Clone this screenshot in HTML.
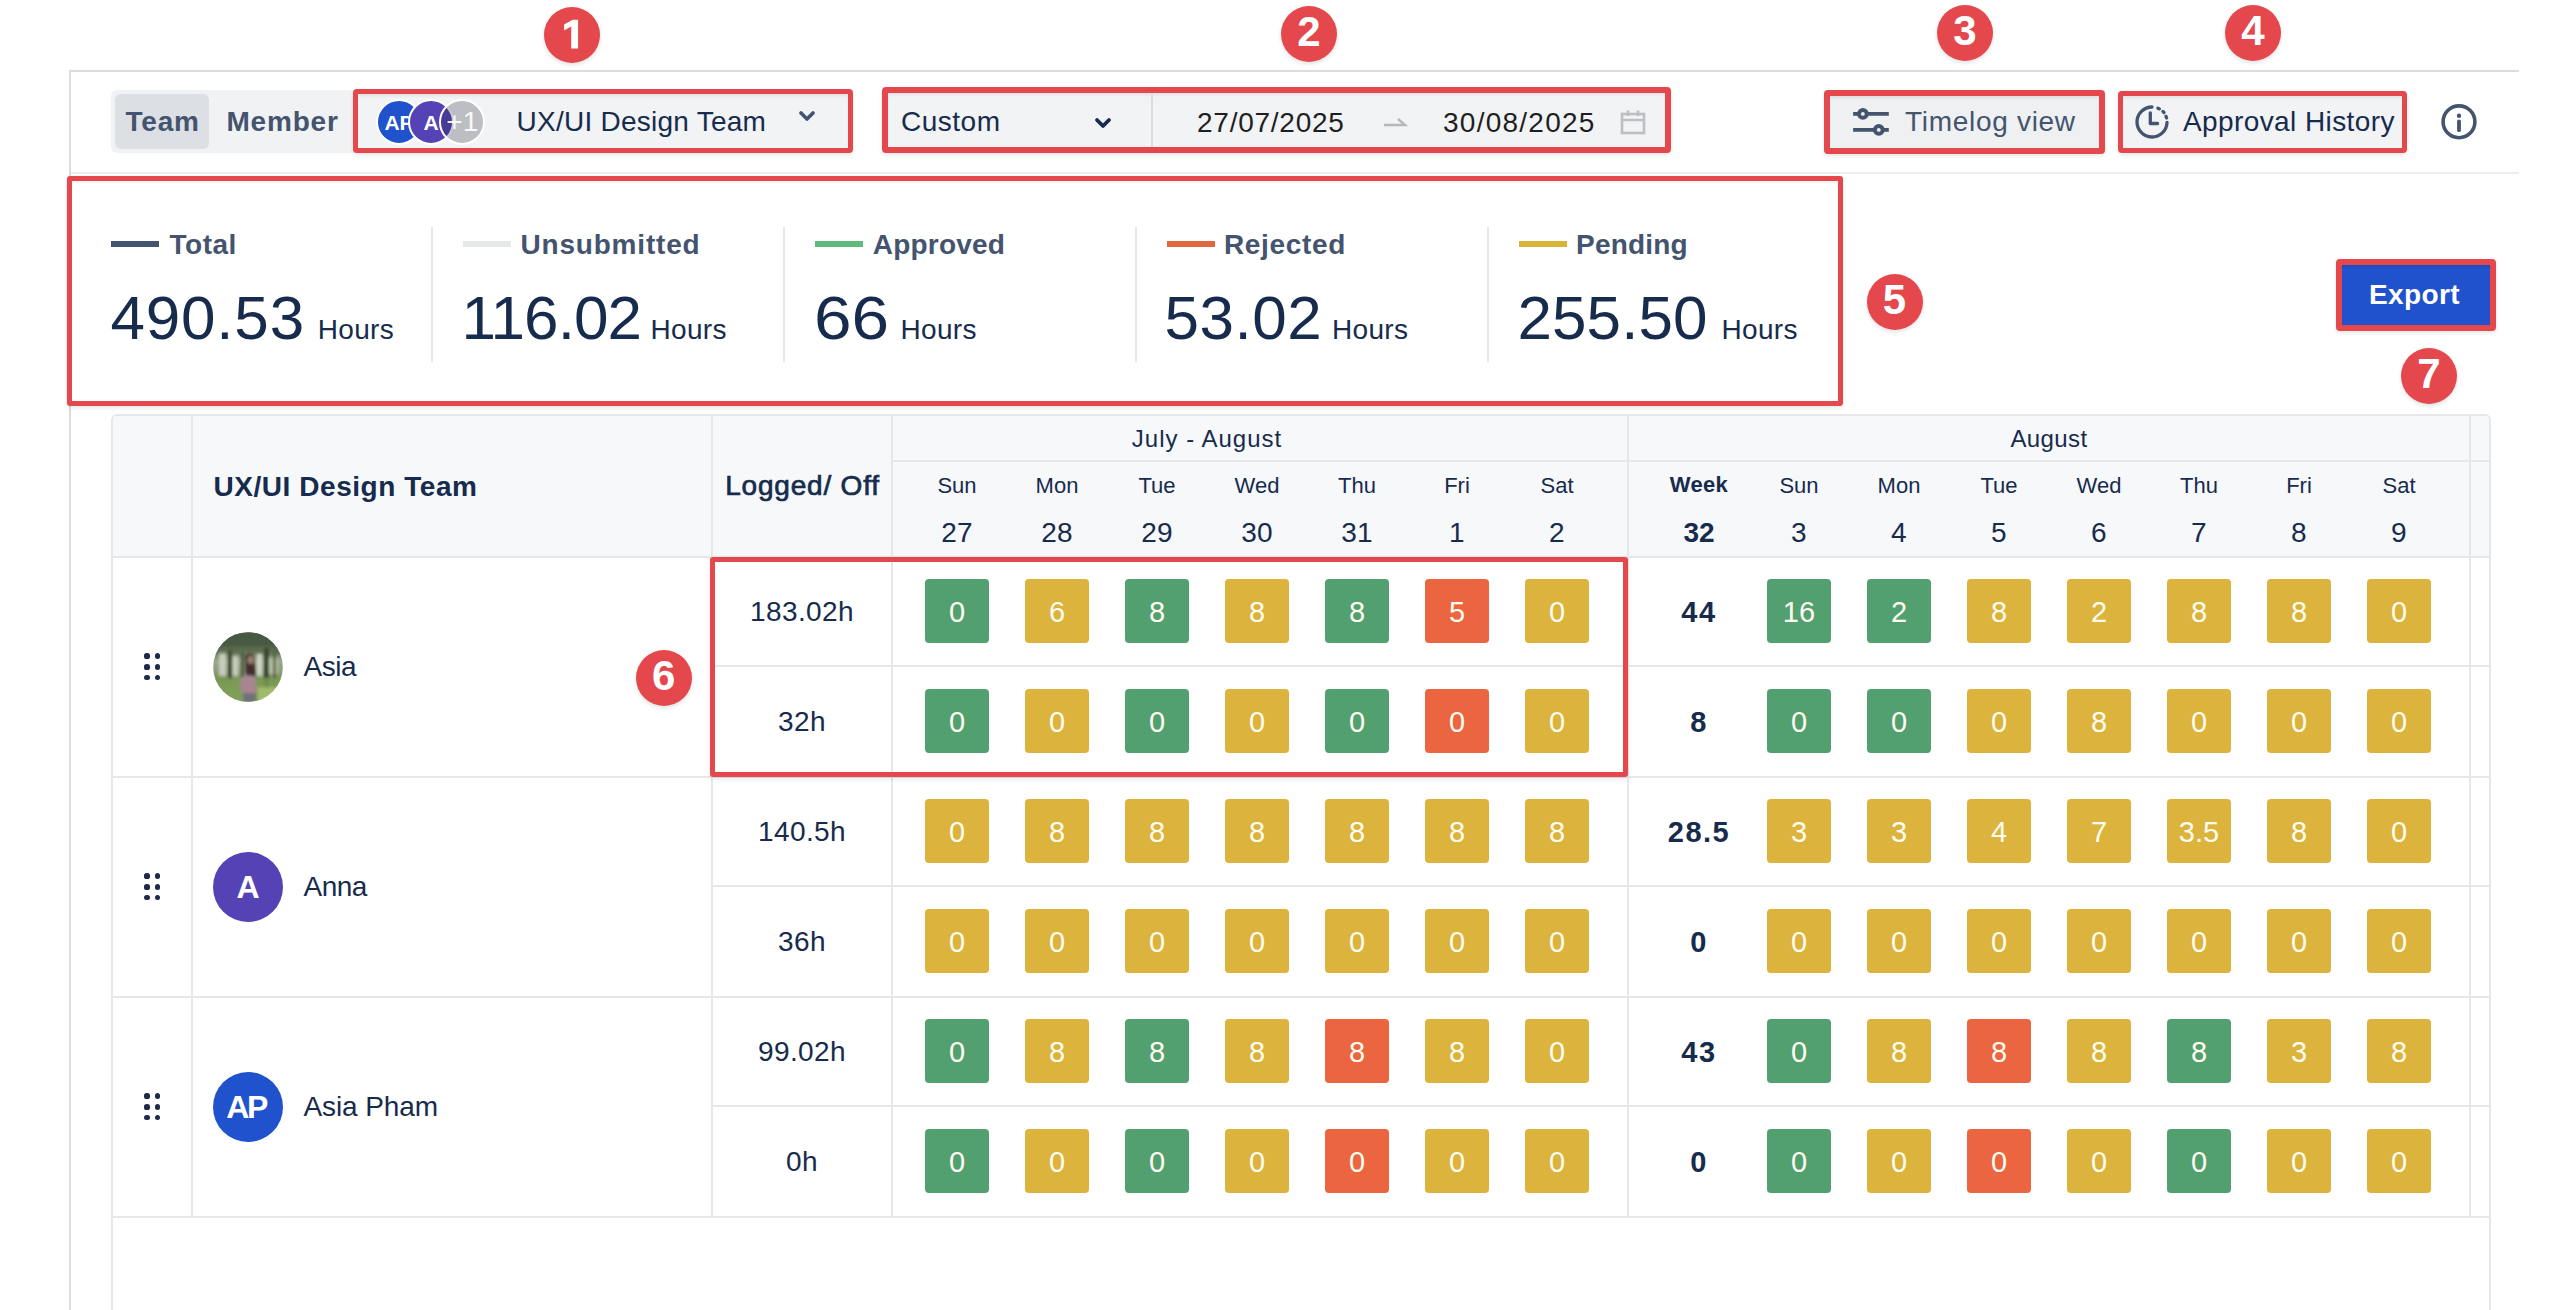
<!DOCTYPE html>
<html><head><meta charset="utf-8"><style>
html,body{margin:0;padding:0;background:#fff;}
body{width:2568px;height:1310px;position:relative;overflow:hidden;font-family:"Liberation Sans",sans-serif;}
.t{position:absolute;white-space:nowrap;}
.b{position:absolute;}
.cell{position:absolute;width:64px;height:64px;border-radius:4px;color:#fffdf0;font-size:29px;line-height:66px;text-align:center;font-family:"Liberation Sans",sans-serif;}
.badge{position:absolute;width:56px;height:56px;border-radius:50%;background:#e4474c;color:#fff;font-weight:700;font-size:42px;line-height:52.8px;text-align:center;box-shadow:0 2px 4px rgba(0,0,0,0.12);}
</style></head><body>
<div class="b" style="left:69px;top:70px;width:2450px;height:2px;background:#dcdcdc"></div>
<div class="b" style="left:69px;top:70px;width:2px;height:1240px;background:#dcdcdc"></div>
<div class="b" style="left:71px;top:172px;width:2448px;height:2px;background:#ebedf0"></div>
<div class="b" style="left:111px;top:90px;width:260px;height:63px;background:#f1f2f4;border-radius:6px"></div>
<div class="b" style="left:115px;top:94px;width:94px;height:55px;background:#dcdfe4;border-radius:6px"></div>
<div class="t" style="left:125.5px;top:107.8px;font-size:28px;line-height:28px;color:#44546f;font-weight:700;letter-spacing:0.8px;">Team</div>
<div class="t" style="left:226.5px;top:107.8px;font-size:28px;line-height:28px;color:#44546f;font-weight:700;letter-spacing:0.8px;">Member</div>
<div class="b" style="left:353px;top:89px;width:500px;height:64px;background:#f1f3f5;border:5px solid #e4474c;border-radius:4px;box-sizing:border-box;box-shadow:0 2px 4px rgba(0,0,0,0.10), inset 0 3px 3px -1px rgba(0,0,0,0.07)"></div>
<div class="b" style="left:376.0px;top:98.8px;width:46px;height:46px;border-radius:50%;background:#1f52cc;box-sizing:border-box;border:2px solid #fff;"></div>
<div class="t" style="left:376.0px;width:46px;text-align:center;top:111.5px;font-size:21px;line-height:21px;color:#fff;font-weight:700;letter-spacing:0px;">AP</div>
<div class="b" style="left:408.0px;top:98.8px;width:46px;height:46px;border-radius:50%;background:#5543b6;box-sizing:border-box;border:2px solid #fff;"></div>
<div class="t" style="left:408.0px;width:46px;text-align:center;top:111.5px;font-size:21px;line-height:21px;color:#fff;font-weight:700;letter-spacing:0px;">A</div>
<div class="b" style="left:439.3px;top:98.8px;width:46px;height:46px;border-radius:50%;background:rgba(30,30,50,0.25);box-sizing:border-box;border:2px solid #fff;"></div>
<div class="t" style="left:439.3px;width:46px;text-align:center;top:107.6px;font-size:28px;line-height:28px;color:rgba(255,255,255,0.92);font-weight:400;letter-spacing:0px;">+1</div>
<div class="t" style="left:516.5px;top:107.8px;font-size:28px;line-height:28px;color:#172b4d;font-weight:400;letter-spacing:0.25px;">UX/UI Design Team</div>
<svg class="b" style="left:799px;top:110px" width="16" height="14" viewBox="0 0 16 14"><path d="M2 3 L8 9 L14 3" fill="none" stroke="#44546f" stroke-width="3.6" stroke-linecap="round" stroke-linejoin="round"/></svg>
<div class="b" style="left:882px;top:87px;width:789px;height:66px;background:#f1f3f5;border:6px solid #e4474c;border-radius:4px;box-sizing:border-box;box-shadow:0 2px 4px rgba(0,0,0,0.10), inset 0 3px 3px -1px rgba(0,0,0,0.07)"></div>
<div class="b" style="left:1151px;top:93px;width:2px;height:54px;background:#d9dce0"></div>
<div class="t" style="left:901.0px;top:108.1px;font-size:28px;line-height:28px;color:#172b4d;font-weight:400;letter-spacing:0.5px;">Custom</div>
<svg class="b" style="left:1093px;top:116px" width="20" height="16" viewBox="0 0 20 16"><path d="M4 4 L10 10 L16 4" fill="none" stroke="#172b4d" stroke-width="3.8" stroke-linecap="round" stroke-linejoin="round"/></svg>
<div class="t" style="left:1197.0px;top:108.8px;font-size:28px;line-height:28px;color:#1f1f1f;font-weight:400;letter-spacing:0.75px;">27/07/2025</div>
<div class="t" style="left:1443.0px;top:108.8px;font-size:28px;line-height:28px;color:#1f1f1f;font-weight:400;letter-spacing:1.25px;">30/08/2025</div>
<svg class="b" style="left:1382px;top:114px" width="26" height="14" viewBox="0 0 26 14"><path d="M2 11 H23 L16 5" fill="none" stroke="#b5b8bb" stroke-width="2.4"/></svg>
<svg class="b" style="left:1619px;top:108px" width="28" height="28" viewBox="0 0 28 28"><rect x="3" y="6" width="22" height="19" fill="none" stroke="#bcc0c3" stroke-width="2.6"/><path d="M3 12 H25 M9 2.5 V8 M19 2.5 V8" stroke="#bcc0c3" stroke-width="2.6"/></svg>
<div class="b" style="left:1824px;top:90px;width:281px;height:64px;background:#eef0f2;border:6px solid #e4474c;border-radius:4px;box-sizing:border-box;box-shadow:0 2px 4px rgba(0,0,0,0.10), inset 0 3px 3px -1px rgba(0,0,0,0.07)"></div>
<svg class="b" style="left:1850px;top:104px" width="42" height="36" viewBox="0 0 42 36"><path d="M3.1 9.9 H38.8 M3.1 25.9 H38.8" stroke="#44546f" stroke-width="3.6"/><circle cx="12.9" cy="9.9" r="3.9" fill="#eef0f2" stroke="#44546f" stroke-width="4"/><circle cx="28.8" cy="25.9" r="3.9" fill="#eef0f2" stroke="#44546f" stroke-width="4"/></svg>
<div class="t" style="left:1905.0px;top:107.8px;font-size:28px;line-height:28px;color:#44546f;font-weight:400;letter-spacing:0.7px;">Timelog view</div>
<div class="b" style="left:2118px;top:91px;width:289px;height:62px;background:#f1f3f5;border:5px solid #e4474c;border-radius:4px;box-sizing:border-box;box-shadow:0 2px 4px rgba(0,0,0,0.10), inset 0 3px 3px -1px rgba(0,0,0,0.07)"></div>
<svg class="b" style="left:2131px;top:101px" width="42" height="42" viewBox="0 0 42 42"><path d="M21 6 A15 15 0 1 0 36 21.5" fill="none" stroke="#44546f" stroke-width="3.3" stroke-linecap="round"/><path d="M26.9 7.2 L28.4 7.9 M31.9 10.4 L33 11.6 M35 15.4 L35.6 17" fill="none" stroke="#44546f" stroke-width="3.3" stroke-linecap="round"/><path d="M19.3 11.8 V22.5 H26.6" fill="none" stroke="#44546f" stroke-width="3.3" stroke-linecap="round" stroke-linejoin="round"/></svg>
<div class="t" style="left:2183.0px;top:107.8px;font-size:28px;line-height:28px;color:#172b4d;font-weight:400;letter-spacing:0.4px;">Approval History</div>
<svg class="b" style="left:2439px;top:102px" width="40" height="40" viewBox="0 0 40 40"><circle cx="20" cy="19.8" r="15.9" fill="none" stroke="#44546f" stroke-width="3.6"/><circle cx="20" cy="13.7" r="2.2" fill="#44546f"/><path d="M20 19.3 V28.2" stroke="#44546f" stroke-width="3.8" stroke-linecap="round"/></svg>
<div class="b" style="left:67px;top:175.5px;width:1776px;height:230px;border:5.5px solid #e4474c;border-radius:3px;box-sizing:border-box;box-shadow:0 2px 4px rgba(0,0,0,0.10), inset 0 3px 3px -1px rgba(0,0,0,0.05)"></div>
<div class="b" style="left:111px;top:241px;width:48px;height:6px;background:#44546f"></div>
<div class="t" style="left:169.5px;top:231.3px;font-size:28px;line-height:28px;color:#44546f;font-weight:700;letter-spacing:0.5px;">Total</div>
<div class="t" style="left:110.5px;top:286.7px;font-size:62px;line-height:62px;color:#172b4d;font-weight:400;letter-spacing:0.8px;">490.53</div>
<div class="t" style="left:317.8px;top:315.5px;font-size:28px;line-height:28px;color:#172b4d;font-weight:400;letter-spacing:0.3px;">Hours</div>
<div class="b" style="left:463px;top:241px;width:48px;height:6px;background:#e6e8eb"></div>
<div class="t" style="left:520.5px;top:231.3px;font-size:28px;line-height:28px;color:#44546f;font-weight:700;letter-spacing:0.8px;">Unsubmitted</div>
<div class="t" style="left:461.5px;top:286.7px;font-size:62px;line-height:62px;color:#172b4d;font-weight:400;letter-spacing:-0.9px;">116.02</div>
<div class="t" style="left:650.5px;top:315.5px;font-size:28px;line-height:28px;color:#172b4d;font-weight:400;letter-spacing:0.3px;">Hours</div>
<div class="b" style="left:815px;top:241px;width:48px;height:6px;background:#5fba7d"></div>
<div class="t" style="left:872.8px;top:231.3px;font-size:28px;line-height:28px;color:#44546f;font-weight:700;letter-spacing:0.2px;">Approved</div>
<div class="t" style="left:813.5px;top:286.7px;font-size:62px;line-height:62px;color:#172b4d;font-weight:400;letter-spacing:0px;transform:scaleX(1.09);transform-origin:0 0;">66</div>
<div class="t" style="left:900.5px;top:315.5px;font-size:28px;line-height:28px;color:#172b4d;font-weight:400;letter-spacing:0.3px;">Hours</div>
<div class="b" style="left:1167px;top:241px;width:48px;height:6px;background:#e2673f"></div>
<div class="t" style="left:1224.0px;top:231.3px;font-size:28px;line-height:28px;color:#44546f;font-weight:700;letter-spacing:0.65px;">Rejected</div>
<div class="t" style="left:1164.5px;top:286.7px;font-size:62px;line-height:62px;color:#172b4d;font-weight:400;letter-spacing:0.5px;">53.02</div>
<div class="t" style="left:1332.0px;top:315.5px;font-size:28px;line-height:28px;color:#172b4d;font-weight:400;letter-spacing:0.3px;">Hours</div>
<div class="b" style="left:1519px;top:241px;width:48px;height:6px;background:#d9b43b"></div>
<div class="t" style="left:1576.0px;top:231.3px;font-size:28px;line-height:28px;color:#44546f;font-weight:700;letter-spacing:0.2px;">Pending</div>
<div class="t" style="left:1517.4px;top:286.7px;font-size:62px;line-height:62px;color:#172b4d;font-weight:400;letter-spacing:0.1px;">255.50</div>
<div class="t" style="left:1721.5px;top:315.5px;font-size:28px;line-height:28px;color:#172b4d;font-weight:400;letter-spacing:0.3px;">Hours</div>
<div class="b" style="left:431px;top:227px;width:2px;height:135px;background:#e6e8eb"></div>
<div class="b" style="left:783px;top:227px;width:2px;height:135px;background:#e6e8eb"></div>
<div class="b" style="left:1135px;top:227px;width:2px;height:135px;background:#e6e8eb"></div>
<div class="b" style="left:1487px;top:227px;width:2px;height:135px;background:#e6e8eb"></div>
<div class="b" style="left:2336px;top:259px;width:160px;height:72px;background:#1f52cc;border:6px solid #e4474c;border-radius:4px;box-sizing:border-box;box-shadow:0 2px 4px rgba(0,0,0,0.10), inset 0 3px 3px -1px rgba(0,0,0,0.07)"></div>
<div class="t" style="left:2264.5px;width:300px;text-align:center;top:280.8px;font-size:28px;line-height:28px;color:#ffffff;font-weight:700;letter-spacing:0.4px;">Export</div>
<div class="b" style="left:111px;top:414px;width:2380px;height:916px;border:2px solid #e5e7eb;border-radius:6px;box-sizing:border-box;background:#fff"></div>
<div class="b" style="left:113px;top:416px;width:2376px;height:141px;background:#f6f8fa;border-radius:4px 4px 0 0"></div>
<div class="b" style="left:191px;top:414px;width:2px;height:803px;background:#e5e7eb"></div>
<div class="b" style="left:711px;top:414px;width:2px;height:803px;background:#e5e7eb"></div>
<div class="b" style="left:891px;top:414px;width:2px;height:803px;background:#e5e7eb"></div>
<div class="b" style="left:1627px;top:414px;width:2px;height:803px;background:#e5e7eb"></div>
<div class="b" style="left:2469px;top:414px;width:2px;height:803px;background:#e5e7eb"></div>
<div class="b" style="left:892px;top:460px;width:1599px;height:2px;background:#e5e7eb"></div>
<div class="b" style="left:111px;top:556px;width:2380px;height:2px;background:#e5e7eb"></div>
<div class="b" style="left:712px;top:665px;width:1779px;height:2px;background:#e5e7eb"></div>
<div class="b" style="left:111px;top:776px;width:2380px;height:2px;background:#e5e7eb"></div>
<div class="b" style="left:712px;top:885px;width:1779px;height:2px;background:#e5e7eb"></div>
<div class="b" style="left:111px;top:996px;width:2380px;height:2px;background:#e5e7eb"></div>
<div class="b" style="left:712px;top:1105px;width:1779px;height:2px;background:#e5e7eb"></div>
<div class="b" style="left:111px;top:1216px;width:2380px;height:2px;background:#e5e7eb"></div>
<div class="t" style="left:213.5px;top:472.5px;font-size:28px;line-height:28px;color:#172b4d;font-weight:700;letter-spacing:0.55px;">UX/UI Design Team</div>
<div class="t" style="left:652.5px;width:300px;text-align:center;top:472.3px;font-size:28px;line-height:28px;color:#172b4d;font-weight:400;letter-spacing:0.8px;-webkit-text-stroke:0.7px #172b4d;">Logged/ Off</div>
<div class="t" style="left:1057.0px;width:300px;text-align:center;top:427.4px;font-size:24px;line-height:24px;color:#172b4d;font-weight:400;letter-spacing:1.0px;">July - August</div>
<div class="t" style="left:1899.0px;width:300px;text-align:center;top:427.4px;font-size:24px;line-height:24px;color:#172b4d;font-weight:400;letter-spacing:0.4px;">August</div>
<div class="t" style="left:907.0px;width:100px;text-align:center;top:474.6px;font-size:22px;line-height:22px;color:#172b4d;font-weight:400;letter-spacing:0px;">Sun</div>
<div class="t" style="left:907.0px;width:100px;text-align:center;top:519.2px;font-size:28px;line-height:28px;color:#172b4d;font-weight:400;letter-spacing:0.3px;">27</div>
<div class="t" style="left:1007.0px;width:100px;text-align:center;top:474.6px;font-size:22px;line-height:22px;color:#172b4d;font-weight:400;letter-spacing:0px;">Mon</div>
<div class="t" style="left:1007.0px;width:100px;text-align:center;top:519.2px;font-size:28px;line-height:28px;color:#172b4d;font-weight:400;letter-spacing:0.3px;">28</div>
<div class="t" style="left:1107.0px;width:100px;text-align:center;top:474.6px;font-size:22px;line-height:22px;color:#172b4d;font-weight:400;letter-spacing:0px;">Tue</div>
<div class="t" style="left:1107.0px;width:100px;text-align:center;top:519.2px;font-size:28px;line-height:28px;color:#172b4d;font-weight:400;letter-spacing:0.3px;">29</div>
<div class="t" style="left:1207.0px;width:100px;text-align:center;top:474.6px;font-size:22px;line-height:22px;color:#172b4d;font-weight:400;letter-spacing:0px;">Wed</div>
<div class="t" style="left:1207.0px;width:100px;text-align:center;top:519.2px;font-size:28px;line-height:28px;color:#172b4d;font-weight:400;letter-spacing:0.3px;">30</div>
<div class="t" style="left:1307.0px;width:100px;text-align:center;top:474.6px;font-size:22px;line-height:22px;color:#172b4d;font-weight:400;letter-spacing:0px;">Thu</div>
<div class="t" style="left:1307.0px;width:100px;text-align:center;top:519.2px;font-size:28px;line-height:28px;color:#172b4d;font-weight:400;letter-spacing:0.3px;">31</div>
<div class="t" style="left:1407.0px;width:100px;text-align:center;top:474.6px;font-size:22px;line-height:22px;color:#172b4d;font-weight:400;letter-spacing:0px;">Fri</div>
<div class="t" style="left:1407.0px;width:100px;text-align:center;top:519.2px;font-size:28px;line-height:28px;color:#172b4d;font-weight:400;letter-spacing:0.3px;">1</div>
<div class="t" style="left:1507.0px;width:100px;text-align:center;top:474.6px;font-size:22px;line-height:22px;color:#172b4d;font-weight:400;letter-spacing:0px;">Sat</div>
<div class="t" style="left:1507.0px;width:100px;text-align:center;top:519.2px;font-size:28px;line-height:28px;color:#172b4d;font-weight:400;letter-spacing:0.3px;">2</div>
<div class="t" style="left:1649.0px;width:100px;text-align:center;top:474.1px;font-size:22px;line-height:22px;color:#172b4d;font-weight:700;letter-spacing:0.3px;">Week</div>
<div class="t" style="left:1649.0px;width:100px;text-align:center;top:519.3px;font-size:28px;line-height:28px;color:#172b4d;font-weight:700;letter-spacing:0px;">32</div>
<div class="t" style="left:1749.0px;width:100px;text-align:center;top:474.6px;font-size:22px;line-height:22px;color:#172b4d;font-weight:400;letter-spacing:0px;">Sun</div>
<div class="t" style="left:1749.0px;width:100px;text-align:center;top:519.2px;font-size:28px;line-height:28px;color:#172b4d;font-weight:400;letter-spacing:0.3px;">3</div>
<div class="t" style="left:1849.0px;width:100px;text-align:center;top:474.6px;font-size:22px;line-height:22px;color:#172b4d;font-weight:400;letter-spacing:0px;">Mon</div>
<div class="t" style="left:1849.0px;width:100px;text-align:center;top:519.2px;font-size:28px;line-height:28px;color:#172b4d;font-weight:400;letter-spacing:0.3px;">4</div>
<div class="t" style="left:1949.0px;width:100px;text-align:center;top:474.6px;font-size:22px;line-height:22px;color:#172b4d;font-weight:400;letter-spacing:0px;">Tue</div>
<div class="t" style="left:1949.0px;width:100px;text-align:center;top:519.2px;font-size:28px;line-height:28px;color:#172b4d;font-weight:400;letter-spacing:0.3px;">5</div>
<div class="t" style="left:2049.0px;width:100px;text-align:center;top:474.6px;font-size:22px;line-height:22px;color:#172b4d;font-weight:400;letter-spacing:0px;">Wed</div>
<div class="t" style="left:2049.0px;width:100px;text-align:center;top:519.2px;font-size:28px;line-height:28px;color:#172b4d;font-weight:400;letter-spacing:0.3px;">6</div>
<div class="t" style="left:2149.0px;width:100px;text-align:center;top:474.6px;font-size:22px;line-height:22px;color:#172b4d;font-weight:400;letter-spacing:0px;">Thu</div>
<div class="t" style="left:2149.0px;width:100px;text-align:center;top:519.2px;font-size:28px;line-height:28px;color:#172b4d;font-weight:400;letter-spacing:0.3px;">7</div>
<div class="t" style="left:2249.0px;width:100px;text-align:center;top:474.6px;font-size:22px;line-height:22px;color:#172b4d;font-weight:400;letter-spacing:0px;">Fri</div>
<div class="t" style="left:2249.0px;width:100px;text-align:center;top:519.2px;font-size:28px;line-height:28px;color:#172b4d;font-weight:400;letter-spacing:0.3px;">8</div>
<div class="t" style="left:2349.0px;width:100px;text-align:center;top:474.6px;font-size:22px;line-height:22px;color:#172b4d;font-weight:400;letter-spacing:0px;">Sat</div>
<div class="t" style="left:2349.0px;width:100px;text-align:center;top:519.2px;font-size:28px;line-height:28px;color:#172b4d;font-weight:400;letter-spacing:0.3px;">9</div>
<div class="b" style="left:144.4px;top:653.4px;width:5.2px;height:5.2px;border-radius:50%;background:#1e2a4a"></div>
<div class="b" style="left:144.4px;top:664.4px;width:5.2px;height:5.2px;border-radius:50%;background:#1e2a4a"></div>
<div class="b" style="left:144.4px;top:674.9px;width:5.2px;height:5.2px;border-radius:50%;background:#1e2a4a"></div>
<div class="b" style="left:154.9px;top:653.4px;width:5.2px;height:5.2px;border-radius:50%;background:#1e2a4a"></div>
<div class="b" style="left:154.9px;top:664.4px;width:5.2px;height:5.2px;border-radius:50%;background:#1e2a4a"></div>
<div class="b" style="left:154.9px;top:674.9px;width:5.2px;height:5.2px;border-radius:50%;background:#1e2a4a"></div>
<svg class="b" style="left:213px;top:632px" width="70" height="70" viewBox="0 0 70 70"><defs><clipPath id="cp"><circle cx="35" cy="35" r="34.8"/></clipPath><filter id="bl" x="-20%" y="-20%" width="140%" height="140%"><feGaussianBlur stdDeviation="1.6"/></filter><linearGradient id="gg" x1="0" y1="0" x2="0" y2="1"><stop offset="0" stop-color="#4d5d43"/><stop offset="0.25" stop-color="#5f6f52"/><stop offset="0.42" stop-color="#9aa68e"/><stop offset="0.58" stop-color="#8a9a76"/><stop offset="0.7" stop-color="#6e8c4c"/><stop offset="1" stop-color="#9db56a"/></linearGradient></defs><g clip-path="url(#cp)"><rect width="70" height="70" fill="url(#gg)"/><g filter="url(#bl)"><rect x="0" y="0" width="70" height="16" fill="#465840" opacity="0.85"/><rect x="6" y="20" width="7" height="24" fill="#cfd5c6" opacity="0.85"/><rect x="20" y="24" width="5" height="20" fill="#d6dbcf" opacity="0.8"/><rect x="44" y="22" width="5" height="22" fill="#dde1d6" opacity="0.85"/><rect x="56" y="26" width="9" height="16" fill="#bfcaae" opacity="0.8"/><rect x="0" y="14" width="70" height="8" fill="#5a6a4c" opacity="0.6"/><rect x="15" y="18" width="4" height="30" fill="#3e4c35"/><rect x="28" y="20" width="3" height="28" fill="#4b5a40"/><rect x="51" y="16" width="5" height="40" fill="#39452f"/><rect x="60" y="18" width="3" height="30" fill="#54623f"/><rect x="0" y="46" width="70" height="24" fill="#7d9c55" opacity="0.8"/><rect x="45" y="55" width="25" height="15" fill="#a9c070" opacity="0.8"/><path d="M32 24 Q37 19 41 24 L43 44 L33 44 Z" fill="#3f2e2a"/><ellipse cx="37.5" cy="28" rx="3" ry="4" fill="#9c7e74"/><path d="M27 50 Q28 44 33 43 L41 44 Q44 52 43 63 L30 63 Q28 57 27 50 Z" fill="#a98493"/><rect x="30" y="61" width="13" height="10" fill="#6f7278"/></g></g></svg>
<div class="t" style="left:303.5px;top:653.3px;font-size:28px;line-height:28px;color:#172b4d;font-weight:400;letter-spacing:-0.5px;">Asia</div>
<div class="t" style="left:712.0px;width:180px;text-align:center;top:598.3px;font-size:28px;line-height:28px;color:#172b4d;font-weight:400;letter-spacing:0.4px;">183.02h</div>
<div class="t" style="left:712.0px;width:180px;text-align:center;top:708.3px;font-size:28px;line-height:28px;color:#172b4d;font-weight:400;letter-spacing:0.4px;">32h</div>
<div class="t" style="left:1649.0px;width:100px;text-align:center;top:597.5px;font-size:29px;line-height:29px;color:#172b4d;font-weight:700;letter-spacing:1.5px;">44</div>
<div class="t" style="left:1649.0px;width:100px;text-align:center;top:707.5px;font-size:29px;line-height:29px;color:#172b4d;font-weight:700;letter-spacing:1.5px;">8</div>
<div class="cell" style="left:925px;top:579px;background:#52a070">0</div>
<div class="cell" style="left:1767px;top:579px;background:#52a070">16</div>
<div class="cell" style="left:1025px;top:579px;background:#dbb33d">6</div>
<div class="cell" style="left:1867px;top:579px;background:#52a070">2</div>
<div class="cell" style="left:1125px;top:579px;background:#52a070">8</div>
<div class="cell" style="left:1967px;top:579px;background:#dbb33d">8</div>
<div class="cell" style="left:1225px;top:579px;background:#dbb33d">8</div>
<div class="cell" style="left:2067px;top:579px;background:#dbb33d">2</div>
<div class="cell" style="left:1325px;top:579px;background:#52a070">8</div>
<div class="cell" style="left:2167px;top:579px;background:#dbb33d">8</div>
<div class="cell" style="left:1425px;top:579px;background:#ea6540">5</div>
<div class="cell" style="left:2267px;top:579px;background:#dbb33d">8</div>
<div class="cell" style="left:1525px;top:579px;background:#dbb33d">0</div>
<div class="cell" style="left:2367px;top:579px;background:#dbb33d">0</div>
<div class="cell" style="left:925px;top:689px;background:#52a070">0</div>
<div class="cell" style="left:1767px;top:689px;background:#52a070">0</div>
<div class="cell" style="left:1025px;top:689px;background:#dbb33d">0</div>
<div class="cell" style="left:1867px;top:689px;background:#52a070">0</div>
<div class="cell" style="left:1125px;top:689px;background:#52a070">0</div>
<div class="cell" style="left:1967px;top:689px;background:#dbb33d">0</div>
<div class="cell" style="left:1225px;top:689px;background:#dbb33d">0</div>
<div class="cell" style="left:2067px;top:689px;background:#dbb33d">8</div>
<div class="cell" style="left:1325px;top:689px;background:#52a070">0</div>
<div class="cell" style="left:2167px;top:689px;background:#dbb33d">0</div>
<div class="cell" style="left:1425px;top:689px;background:#ea6540">0</div>
<div class="cell" style="left:2267px;top:689px;background:#dbb33d">0</div>
<div class="cell" style="left:1525px;top:689px;background:#dbb33d">0</div>
<div class="cell" style="left:2367px;top:689px;background:#dbb33d">0</div>
<div class="b" style="left:144.4px;top:873.4px;width:5.2px;height:5.2px;border-radius:50%;background:#1e2a4a"></div>
<div class="b" style="left:144.4px;top:884.4px;width:5.2px;height:5.2px;border-radius:50%;background:#1e2a4a"></div>
<div class="b" style="left:144.4px;top:894.9px;width:5.2px;height:5.2px;border-radius:50%;background:#1e2a4a"></div>
<div class="b" style="left:154.9px;top:873.4px;width:5.2px;height:5.2px;border-radius:50%;background:#1e2a4a"></div>
<div class="b" style="left:154.9px;top:884.4px;width:5.2px;height:5.2px;border-radius:50%;background:#1e2a4a"></div>
<div class="b" style="left:154.9px;top:894.9px;width:5.2px;height:5.2px;border-radius:50%;background:#1e2a4a"></div>
<div class="b" style="left:213px;top:852px;width:70px;height:70px;border-radius:50%;background:#5543b6"></div>
<div class="t" style="left:213.0px;width:70px;text-align:center;top:870.9px;font-size:32px;line-height:32px;color:#fff;font-weight:700;letter-spacing:0px;">A</div>
<div class="t" style="left:303.5px;top:873.3px;font-size:28px;line-height:28px;color:#172b4d;font-weight:400;letter-spacing:-0.5px;">Anna</div>
<div class="t" style="left:712.0px;width:180px;text-align:center;top:818.3px;font-size:28px;line-height:28px;color:#172b4d;font-weight:400;letter-spacing:0.4px;">140.5h</div>
<div class="t" style="left:712.0px;width:180px;text-align:center;top:928.3px;font-size:28px;line-height:28px;color:#172b4d;font-weight:400;letter-spacing:0.4px;">36h</div>
<div class="t" style="left:1649.0px;width:100px;text-align:center;top:817.5px;font-size:29px;line-height:29px;color:#172b4d;font-weight:700;letter-spacing:1.5px;">28.5</div>
<div class="t" style="left:1649.0px;width:100px;text-align:center;top:927.5px;font-size:29px;line-height:29px;color:#172b4d;font-weight:700;letter-spacing:1.5px;">0</div>
<div class="cell" style="left:925px;top:799px;background:#dbb33d">0</div>
<div class="cell" style="left:1767px;top:799px;background:#dbb33d">3</div>
<div class="cell" style="left:1025px;top:799px;background:#dbb33d">8</div>
<div class="cell" style="left:1867px;top:799px;background:#dbb33d">3</div>
<div class="cell" style="left:1125px;top:799px;background:#dbb33d">8</div>
<div class="cell" style="left:1967px;top:799px;background:#dbb33d">4</div>
<div class="cell" style="left:1225px;top:799px;background:#dbb33d">8</div>
<div class="cell" style="left:2067px;top:799px;background:#dbb33d">7</div>
<div class="cell" style="left:1325px;top:799px;background:#dbb33d">8</div>
<div class="cell" style="left:2167px;top:799px;background:#dbb33d">3.5</div>
<div class="cell" style="left:1425px;top:799px;background:#dbb33d">8</div>
<div class="cell" style="left:2267px;top:799px;background:#dbb33d">8</div>
<div class="cell" style="left:1525px;top:799px;background:#dbb33d">8</div>
<div class="cell" style="left:2367px;top:799px;background:#dbb33d">0</div>
<div class="cell" style="left:925px;top:909px;background:#dbb33d">0</div>
<div class="cell" style="left:1767px;top:909px;background:#dbb33d">0</div>
<div class="cell" style="left:1025px;top:909px;background:#dbb33d">0</div>
<div class="cell" style="left:1867px;top:909px;background:#dbb33d">0</div>
<div class="cell" style="left:1125px;top:909px;background:#dbb33d">0</div>
<div class="cell" style="left:1967px;top:909px;background:#dbb33d">0</div>
<div class="cell" style="left:1225px;top:909px;background:#dbb33d">0</div>
<div class="cell" style="left:2067px;top:909px;background:#dbb33d">0</div>
<div class="cell" style="left:1325px;top:909px;background:#dbb33d">0</div>
<div class="cell" style="left:2167px;top:909px;background:#dbb33d">0</div>
<div class="cell" style="left:1425px;top:909px;background:#dbb33d">0</div>
<div class="cell" style="left:2267px;top:909px;background:#dbb33d">0</div>
<div class="cell" style="left:1525px;top:909px;background:#dbb33d">0</div>
<div class="cell" style="left:2367px;top:909px;background:#dbb33d">0</div>
<div class="b" style="left:144.4px;top:1093.4px;width:5.2px;height:5.2px;border-radius:50%;background:#1e2a4a"></div>
<div class="b" style="left:144.4px;top:1104.4px;width:5.2px;height:5.2px;border-radius:50%;background:#1e2a4a"></div>
<div class="b" style="left:144.4px;top:1114.9px;width:5.2px;height:5.2px;border-radius:50%;background:#1e2a4a"></div>
<div class="b" style="left:154.9px;top:1093.4px;width:5.2px;height:5.2px;border-radius:50%;background:#1e2a4a"></div>
<div class="b" style="left:154.9px;top:1104.4px;width:5.2px;height:5.2px;border-radius:50%;background:#1e2a4a"></div>
<div class="b" style="left:154.9px;top:1114.9px;width:5.2px;height:5.2px;border-radius:50%;background:#1e2a4a"></div>
<div class="b" style="left:213px;top:1072px;width:70px;height:70px;border-radius:50%;background:#1f52cc"></div>
<div class="t" style="left:211.0px;width:70px;text-align:center;top:1090.9px;font-size:32px;line-height:32px;color:#fff;font-weight:700;letter-spacing:-2.5px;">AP</div>
<div class="t" style="left:303.5px;top:1093.3px;font-size:28px;line-height:28px;color:#172b4d;font-weight:400;letter-spacing:-0.1px;">Asia Pham</div>
<div class="t" style="left:712.0px;width:180px;text-align:center;top:1038.3px;font-size:28px;line-height:28px;color:#172b4d;font-weight:400;letter-spacing:0.4px;">99.02h</div>
<div class="t" style="left:712.0px;width:180px;text-align:center;top:1148.3px;font-size:28px;line-height:28px;color:#172b4d;font-weight:400;letter-spacing:0.4px;">0h</div>
<div class="t" style="left:1649.0px;width:100px;text-align:center;top:1037.5px;font-size:29px;line-height:29px;color:#172b4d;font-weight:700;letter-spacing:1.5px;">43</div>
<div class="t" style="left:1649.0px;width:100px;text-align:center;top:1147.5px;font-size:29px;line-height:29px;color:#172b4d;font-weight:700;letter-spacing:1.5px;">0</div>
<div class="cell" style="left:925px;top:1019px;background:#52a070">0</div>
<div class="cell" style="left:1767px;top:1019px;background:#52a070">0</div>
<div class="cell" style="left:1025px;top:1019px;background:#dbb33d">8</div>
<div class="cell" style="left:1867px;top:1019px;background:#dbb33d">8</div>
<div class="cell" style="left:1125px;top:1019px;background:#52a070">8</div>
<div class="cell" style="left:1967px;top:1019px;background:#ea6540">8</div>
<div class="cell" style="left:1225px;top:1019px;background:#dbb33d">8</div>
<div class="cell" style="left:2067px;top:1019px;background:#dbb33d">8</div>
<div class="cell" style="left:1325px;top:1019px;background:#ea6540">8</div>
<div class="cell" style="left:2167px;top:1019px;background:#52a070">8</div>
<div class="cell" style="left:1425px;top:1019px;background:#dbb33d">8</div>
<div class="cell" style="left:2267px;top:1019px;background:#dbb33d">3</div>
<div class="cell" style="left:1525px;top:1019px;background:#dbb33d">0</div>
<div class="cell" style="left:2367px;top:1019px;background:#dbb33d">8</div>
<div class="cell" style="left:925px;top:1129px;background:#52a070">0</div>
<div class="cell" style="left:1767px;top:1129px;background:#52a070">0</div>
<div class="cell" style="left:1025px;top:1129px;background:#dbb33d">0</div>
<div class="cell" style="left:1867px;top:1129px;background:#dbb33d">0</div>
<div class="cell" style="left:1125px;top:1129px;background:#52a070">0</div>
<div class="cell" style="left:1967px;top:1129px;background:#ea6540">0</div>
<div class="cell" style="left:1225px;top:1129px;background:#dbb33d">0</div>
<div class="cell" style="left:2067px;top:1129px;background:#dbb33d">0</div>
<div class="cell" style="left:1325px;top:1129px;background:#ea6540">0</div>
<div class="cell" style="left:2167px;top:1129px;background:#52a070">0</div>
<div class="cell" style="left:1425px;top:1129px;background:#dbb33d">0</div>
<div class="cell" style="left:2267px;top:1129px;background:#dbb33d">0</div>
<div class="cell" style="left:1525px;top:1129px;background:#dbb33d">0</div>
<div class="cell" style="left:2367px;top:1129px;background:#dbb33d">0</div>
<div class="b" style="left:710px;top:557px;width:918px;height:220px;border:5px solid #e4474c;border-radius:3px;box-sizing:border-box;box-shadow:0 2px 4px rgba(0,0,0,0.10)"></div>
<div class="badge" style="left:543.7px;top:7px"><svg width="56" height="56" viewBox="0 0 56 56" style="position:absolute;left:0;top:0"><path d="M28.7 12.7 H34.1 V41.4 H27.2 V19.5 L20.1 23.5 V17.6 Z" fill="#fff"/></svg></div>
<div class="badge" style="left:1280.9px;top:5.799999999999997px">2</div>
<div class="badge" style="left:1937px;top:5px">3</div>
<div class="badge" style="left:2225px;top:5px">4</div>
<div class="badge" style="left:1866.5px;top:273.5px">5</div>
<div class="badge" style="left:635.8px;top:649.7px">6</div>
<div class="badge" style="left:2401px;top:348px">7</div>
</body></html>
